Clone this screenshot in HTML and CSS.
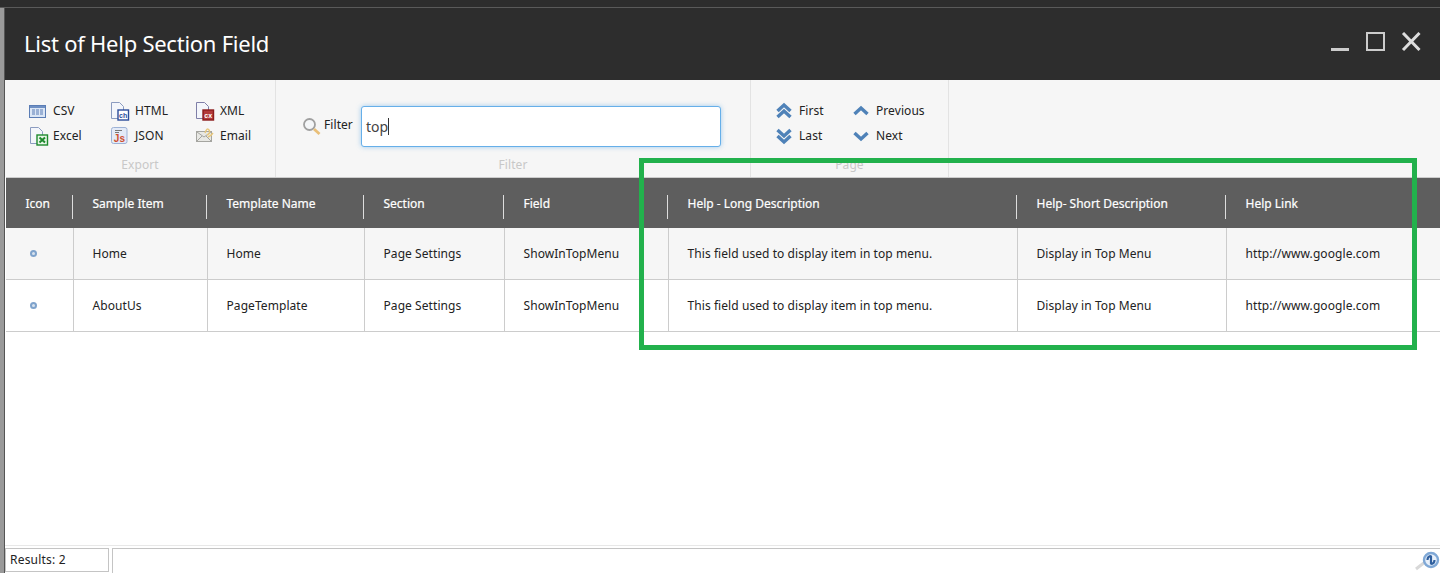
FILE: index.html
```html
<!DOCTYPE html>
<html lang="en">
<head>
    <meta charset="UTF-8">
    <meta name="viewport" content="width=device-width, initial-scale=1.0">
    <title>List of Help Section Field</title>
    <link rel="stylesheet" href="styles.css">
</head>
<body>
<div class="topline"></div>
<div class="window">
    <div class="titlebar">
        <h1>List of Help Section Field</h1>
        <div class="winbtns">
            <svg width="20" height="20" viewBox="0 0 20 20"><rect x="0" y="16" width="18" height="3" fill="#ccc"/></svg>
            <svg width="20" height="20" viewBox="0 0 20 20"><rect x="1" y="1" width="17" height="17" fill="none" stroke="#ccc" stroke-width="2"/></svg>
            <svg width="20" height="20" viewBox="0 0 20 20"><path d="M2 1 L18.500 18 M18.500 1 L2 18" stroke="#ddd" stroke-width="3" fill="none"/></svg>
        </div>
    </div>

    <div class="ribbon">
        <div class="group group-export">
            <div class="btns btns-export">
                <div class="btn">
                    <svg class="ico-csv" width="18" height="18" viewBox="0 0 18 18"><rect x="0.500" y="3.500" width="16" height="12" fill="#dbe6f5" stroke="#5b7db5"/><rect x="1" y="4" width="15" height="2" fill="#6f90c4"/><path d="M3 8h3M7 8h3M11 8h3M3 10h3M7 10h3M11 10h3M3 12h3M7 12h3M11 12h3" stroke="#5b7db5"/></svg>
                    <span>CSV</span>
                </div>
                <div class="btn">
                    <svg width="20" height="20" viewBox="0 0 20 20"><path d="M1.500 1.500h8l4 4v12h-12z" fill="#f4f6fb" stroke="#8c9cc0"/><rect x="8" y="9" width="10.500" height="10" fill="#fff" stroke="#2b4c9b" stroke-width="1.400"/><text class="ico-text" x="13.200" y="16.500" fill="#2b4c9b">ch</text></svg>
                    <span>HTML</span>
                </div>
                <div class="btn">
                    <svg width="20" height="20" viewBox="0 0 20 20"><path d="M1.500 1.500h8l4 4v12h-12z" fill="#f4f6fb" stroke="#7f7fa8"/><rect x="8" y="9" width="10.500" height="10" fill="#b33a3a" stroke="#8c1c1c" stroke-width="1.400"/><text class="ico-text" x="13.200" y="16.500" fill="#fff">cx</text></svg>
                    <span>XML</span>
                </div>
                <div class="btn">
                    <svg class="ico-excel" width="20" height="20" viewBox="0 0 20 20"><path d="M1.500 1.500h8l4 4v12h-12z" fill="#f4f6fb" stroke="#8c9cc0"/><rect x="8" y="9" width="10.500" height="10" fill="#e8f5e8" stroke="#1f8a2e" stroke-width="1.400"/><path d="M10.500 11.500l5.500 5M16 11.500l-5.500 5" stroke="#1f8a2e" stroke-width="2"/></svg>
                    <span>Excel</span>
                </div>
                <div class="btn">
                    <svg width="20" height="20" viewBox="0 0 20 20"><rect x="1.500" y="1.500" width="15.500" height="16" rx="2" fill="#e3eaf7" stroke="#9db2d6"/><path d="M5 4.500h7M5 6.500h4" stroke="#777"/><text class="ico-js" x="9.500" y="15.800" fill="#d0502f">Js</text></svg>
                    <span>JSON</span>
                </div>
                <div class="btn">
                    <svg width="20" height="20" viewBox="0 0 20 20"><rect x="1.500" y="5.500" width="15" height="10" fill="#e8e8e4" stroke="#a5a5a0"/><path d="M2 6l7 5 7-5M2 15l5-5M16 15l-5-5" fill="none" stroke="#a5a5a0"/><path d="M10 7q2-6 4-3t-2 5M13 11q3-1 5-4" fill="none" stroke="#e8c77a" stroke-width="1.400"/></svg>
                    <span>Email</span>
                </div>
            </div>
            <div class="group-label">Export</div>
        </div>

        <div class="group group-filter">
            <div class="filter-row">
                <svg width="19" height="19" viewBox="0 0 19 19"><circle cx="7.500" cy="7.500" r="5.500" fill="#f4f6f8" stroke="#a0a0a0" stroke-width="1.800"/><path d="M12 12l5.500 5" stroke="#e9bf78" stroke-width="2.800"/></svg>
                <span class="filter-text">Filter</span>
                <div class="filter-input">top</div>
            </div>
            <div class="group-label">Filter</div>
        </div>

        <div class="group group-page">
            <div class="btns btns-page">
                <div class="btn">
                    <svg width="16" height="18" viewBox="0 0 16 18"><path d="M1.500 9l6.500-6 6.500 6M1.500 15l6.500-6 6.500 6" fill="none" stroke="#4f82b8" stroke-width="3.400"/></svg>
                    <span>First</span>
                </div>
                <div class="btn">
                    <svg width="16" height="18" viewBox="0 0 16 18"><path d="M1.500 12l6.500-6 6.500 6" fill="none" stroke="#4f82b8" stroke-width="3.400"/></svg>
                    <span>Previous</span>
                </div>
                <div class="btn">
                    <svg width="16" height="18" viewBox="0 0 16 18"><path d="M1.500 3l6.500 6 6.500-6M1.500 9l6.500 6 6.500-6" fill="none" stroke="#4f82b8" stroke-width="3.400"/></svg>
                    <span>Last</span>
                </div>
                <div class="btn">
                    <svg width="16" height="18" viewBox="0 0 16 18"><path d="M1.500 6l6.500 6 6.500-6" fill="none" stroke="#4f82b8" stroke-width="3.400"/></svg>
                    <span>Next</span>
                </div>
            </div>
            <div class="group-label">Page</div>
        </div>
    </div>

    <div class="content">
        <table class="grid">
            <colgroup>
                <col class="c-icon">
                <col class="c-item">
                <col class="c-template">
                <col class="c-section">
                <col class="c-field">
                <col class="c-long">
                <col class="c-short">
                <col class="c-link">
            </colgroup>
            <thead>
                <tr>
                    <th>Icon</th>
                    <th>Sample Item</th>
                    <th>Template Name</th>
                    <th>Section</th>
                    <th>Field</th>
                    <th>Help - Long Description</th>
                    <th>Help- Short Description</th>
                    <th class="th-last">Help Link</th>
                </tr>
            </thead>
            <tbody>
                <tr class="odd">
                    <td class="td-icon"><span class="dot"></span></td>
                    <td>Home</td>
                    <td>Home</td>
                    <td>Page Settings</td>
                    <td>ShowInTopMenu</td>
                    <td>This field used to display item in top menu.</td>
                    <td>Display in Top Menu</td>
                    <td>http://www.google.com</td>
                </tr>
                <tr>
                    <td class="td-icon"><span class="dot"></span></td>
                    <td>AboutUs</td>
                    <td>PageTemplate</td>
                    <td>Page Settings</td>
                    <td>ShowInTopMenu</td>
                    <td>This field used to display item in top menu.</td>
                    <td>Display in Top Menu</td>
                    <td>http://www.google.com</td>
                </tr>
            </tbody>
        </table>
    </div>

    <div class="statusbar">
        <div class="results">Results: 2</div>
        <div class="status-rest">
            <svg width="26" height="20" viewBox="0 0 26 20"><path d="M2 18l9-7" stroke="#d8d8d8" stroke-width="3"/><circle cx="17" cy="9" r="7" fill="#e8f0fa" stroke="#7fa8d6" stroke-width="2.400"/><path d="M13.500 9q0-4 4-4M20.500 9q0 4-4 4M17 5v8" fill="none" stroke="#2f5f9e" stroke-width="2.200"/></svg>
        </div>
    </div>
</div>
<div class="highlight"></div>
</body>
</html>
```

FILE: styles.css
```css
html, body {
    margin: 0;
    height: 573px;
    overflow: hidden;
}
body {
    font-family: "Noto Sans", sans-serif;
    font-size: 12px;
    letter-spacing: 0.07px;
    color: #222;
    background-color: #fff;
}
.topline {
    height: 7px;
    background-color: #2d2d2d;
    border-bottom: 1px solid #5a5a5a;
}
.window {
    height: 565px;
    display: flex;
    flex-direction: column;
    border-left: 4px solid #9a9a9a;
    box-shadow: inset 1px 0 0 #555;
}
.titlebar {
    height: 72px;
    flex: none;
    margin-left: 1px;
    padding: 0 19px 0 19px;
    background-color: #2d2d2d;
    display: flex;
    align-items: center;
    justify-content: space-between;
}
.titlebar h1 {
    margin: 0 0 3px;
    font-size: 22px;
    font-weight: 400;
    color: #fff;
    letter-spacing: -0.25px;
}
.winbtns {
    display: flex;
    gap: 15px;
    margin-top: -4px;
}
.ribbon {
    height: 97px;
    flex: none;
    margin-left: 1px;
    background-color: #f6f6f6;
    display: flex;
}
.group {
    box-sizing: border-box;
    height: 97px;
    border-right: 1px solid #e3e3e3;
    display: flex;
    flex-direction: column;
}
.group-export {
    width: 271px;
    padding: 18px 0 0 24px;
}
.group-filter {
    width: 475px;
    padding: 26px 0 0 26px;
}
.group-page {
    width: 198px;
    padding: 18px 0 0 25px;
}
.group-label {
    margin-top: auto;
    padding-bottom: 4px;
    text-align: center;
    color: #c8c8c8;
    line-height: 16px;
}
.group-export .group-label {
    margin-left: -24px;
}
.group-filter .group-label {
    margin-left: -26px;
}
.group-page .group-label {
    margin-left: -25px;
}
.btns {
    display: grid;
    grid-auto-rows: 25px;
}
.btns-export {
    grid-template-columns: 81px 85px 70px;
}
.btns-page {
    grid-template-columns: 77px 90px;
}
.btn {
    display: flex;
    align-items: center;
    gap: 5px;
}
.btns-page .btn {
    gap: 7px;
}
.ico-csv {
    margin-right: 1px;
}
.ico-excel {
    margin-right: -1px;
}
.ico-text {
    font-family: "Liberation Sans", sans-serif;
    font-size: 7px;
    font-weight: 700;
    text-anchor: middle;
}
.ico-js {
    font-family: "Liberation Sans", sans-serif;
    font-size: 10px;
    font-weight: 700;
    text-anchor: middle;
}
.filter-row {
    display: flex;
    align-items: center;
    gap: 3px;
}
.filter-text {
    width: 34px;
    margin-bottom: 4px;
}
.filter-input {
    box-sizing: border-box;
    width: 360px;
    height: 41px;
    padding: 0 4px;
    border: 1px solid #66afe9;
    border-radius: 3px;
    background-color: #fff;
    box-shadow: 0 0 5px rgba(102, 175, 233, 0.6);
    display: flex;
    align-items: center;
    font-size: 14px;
    letter-spacing: 0;
    color: #444;
}
.filter-input::after {
    content: "";
    width: 1px;
    height: 17px;
    background-color: #333;
}
.content {
    flex: 1;
    margin-left: 2px;
    background-color: #fff;
    border-top: 1px solid #ccc;
}
.grid {
    width: 1434px;
    border-collapse: collapse;
    table-layout: fixed;
}
.c-icon { width: 67px; }
.c-item { width: 134px; }
.c-template { width: 157px; }
.c-section { width: 140px; }
.c-field { width: 164px; }
.c-long { width: 349px; }
.c-short { width: 209px; }
.c-link { width: 214px; }
.grid th {
    position: relative;
    height: 50px;
    padding: 0 0 0 19.500px;
    background-color: #5e5e5e;
    color: #fff;
    font-weight: 400;
    letter-spacing: 0;
    text-align: left;
    -webkit-text-stroke: 0.2px #fff;
}
.grid th::after {
    content: "";
    position: absolute;
    right: 0;
    top: 17px;
    width: 1px;
    height: 24px;
    background-color: #ddd;
}
.grid th.th-last::after {
    display: none;
}
.grid td {
    height: 51px;
    padding: 0 0 0 19px;
    border-right: 1px solid #ccc;
    border-bottom: 1px solid #ccc;
    background-color: #fff;
    white-space: nowrap;
}
.grid tr.odd td {
    background-color: #f6f6f6;
}
.grid td:last-child {
    border-right: none;
}
.grid td.td-icon {
    padding-left: 24px;
}
.dot {
    display: block;
    box-sizing: border-box;
    width: 7px;
    height: 7px;
    border-radius: 50%;
    border: 2px solid #7fa3cc;
    background-color: #d8e2ee;
}
.statusbar {
    height: 28px;
    flex: none;
    margin-left: 1px;
    box-sizing: border-box;
    border-top: 1px solid #e8e8e8;
    padding-top: 2px;
    display: flex;
    gap: 3px;
}
.results {
    box-sizing: border-box;
    width: 104px;
    height: 24px;
    padding-left: 4px;
    border: 1px solid #c4c4c4;
    line-height: 22px;
    letter-spacing: 0.2px;
}
.status-rest {
    flex: 1;
    border-top: 1px solid #c4c4c4;
    border-left: 1px solid #c4c4c4;
    display: flex;
    justify-content: flex-end;
    align-items: flex-start;
    padding-top: 2px;
}
.highlight {
    position: absolute;
    left: 639px;
    top: 158px;
    width: 768px;
    height: 182px;
    border: 5px solid #22b14c;
}
```
